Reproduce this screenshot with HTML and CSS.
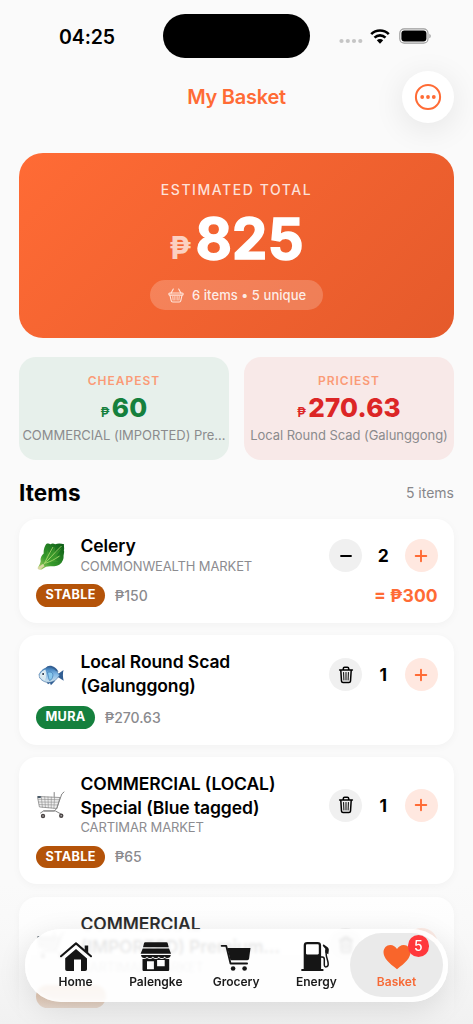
FILE: index.html
```html
<!DOCTYPE html>
<html lang="en">
<head>
<meta charset="utf-8">
<meta name="viewport" content="width=device-width, initial-scale=1">
<title>My Basket</title>
<link rel="stylesheet" href="styles.css">
</head>
<body>
<svg class="defs" width="0" height="0" aria-hidden="true">
  <defs>
    <symbol id="trash" viewBox="0 0 16 18">
      <g fill="none" stroke="#000" stroke-linecap="round" stroke-linejoin="round">
        <path stroke-width="1.5" d="M1.6 4h12.8M5.3 3.8V2.5c0-.9.5-1.3 1.3-1.3h2.8c.8 0 1.3.4 1.3 1.3v1.3M2.8 4.2l.7 10.9c.1.9.6 1.4 1.5 1.4h6c.9 0 1.4-.5 1.5-1.4l.7-10.9"/>
        <path stroke-width="1" d="M5.6 6.5l.3 7.5M8 6.5V14M10.4 6.5l-.3 7.5"/>
      </g>
    </symbol>
    <symbol id="plus" viewBox="0 0 14 14">
      <path d="M7 1.7v10.6M1.7 7h10.6" stroke="#ff6b35" stroke-width="1.9" stroke-linecap="round"/>
    </symbol>
    <symbol id="cart-emoji" viewBox="0 0 28 28">
      <g fill="none" stroke="#858585" stroke-linecap="round" stroke-linejoin="round">
        <path fill="#eeeeee" stroke-width=".8" d="M.8 5.5L23 6.5l-3.2 11L2.8 16z"/>
        <path stroke-width=".55" d="M1.3 8.3l21 .4M1.8 11l19.7.2M2.3 13.6l18.5.4M4.3 5.7l1.1 10.5M7.7 5.8l.7 10.6M11 6l.3 10.7M14.3 6.1l-.1 10.8M17.6 6.3l-.7 11"/>
        <path stroke-width="1" d="M27 1l-2.2 2-5.2 14.8-2.5 2.1H6.8M3.5 22l3-2h12l5.5 3M17.2 1.5v4"/>
      </g>
      <circle cx="6" cy="25" r="2.2" fill="#4b4545"/><circle cx="24.2" cy="24.7" r="2.2" fill="#4b4545"/>
      <circle cx="6" cy="25" r=".8" fill="#bbb"/><circle cx="24.2" cy="24.7" r=".8" fill="#bbb"/>
      <path d="M.8 5.2h3v1.7h-3z" fill="#34495b"/>
    </symbol>
  </defs>
</svg>
<div class="screen">
  <header class="status">
    <div class="time">04:25</div>
    <div class="island"></div>
    <div class="signals">
      <svg class="dots" width="24" height="6" viewBox="0 0 24 6" fill="#c5c5c5"><circle cx="2.5" cy="3" r="2.1"/><circle cx="8.8" cy="3" r="2.1"/><circle cx="15" cy="3" r="2.1"/><circle cx="21.3" cy="3" r="2.1"/></svg>
      <svg class="wifi" width="20" height="15" viewBox="0 0 20 15"><g fill="none" stroke="#000" stroke-width="2.6"><path d="M1.2 5.1C6.1.3 13.9.3 18.8 5.1"/><path d="M4.5 8.6c3.1-3 7.9-3 11 0"/></g><path d="M6.8 11.3c1.8-1.7 4.6-1.7 6.4 0L10 14.7z"/></svg>
      <svg class="battery" width="33" height="16" viewBox="0 0 33 16"><rect x=".8" y=".9" width="28.2" height="14.2" rx="4.4" fill="none" stroke="#9a9a9a" stroke-width="1.1"/><rect x="2.4" y="2.5" width="25" height="11" rx="3"/><path d="M30.4 5.7c1.8.8 1.8 3.8 0 4.6z" fill="#9a9a9a"/></svg>
    </div>
  </header>

  <div class="navbar">
    <h1>My Basket</h1>
    <button class="more" aria-label="More"><svg width="28" height="28" viewBox="0 0 28 28"><circle cx="14" cy="14" r="12.1" fill="none" stroke="#ff6b35" stroke-width="2"/><g fill="#ff6b35"><circle cx="8.2" cy="14" r="1.9"/><circle cx="14" cy="14" r="1.9"/><circle cx="19.8" cy="14" r="1.9"/></g></svg></button>
  </div>

  <main>
    <section class="hero">
      <div class="hero-label">ESTIMATED TOTAL</div>
      <div class="total"><span class="total-peso">₱</span><span class="total-num">825</span></div>
      <div class="summary">
        <svg width="16" height="15" viewBox="0 0 16 15" fill="none" stroke="#ffe6dc" stroke-width="1.1" stroke-linecap="round" stroke-linejoin="round"><rect x=".8" y="5" width="14.4" height="2.1" rx="1"/><path d="M3 5.3L5.3 1M13 5.3L10.7 1M2 7.3l1.2 5.4c.2.9.6 1.3 1.5 1.3h6.6c.9 0 1.3-.4 1.5-1.3L14 7.3"/><path stroke-width=".9" d="M4.8 8.5l.3 3.6M6.9 8.5v3.6M9.1 8.5v3.6M11.2 8.5l-.3 3.6"/></svg>
        <span>6 items • 5 unique</span>
      </div>
    </section>

    <section class="stats">
      <article class="stat cheap">
        <div class="stat-label">CHEAPEST</div>
        <div class="stat-price"><small>₱</small><b>60</b></div>
        <div class="stat-name">COMMERCIAL (IMPORTED) Pre…</div>
      </article>
      <article class="stat pricey">
        <div class="stat-label">PRICIEST</div>
        <div class="stat-price"><small>₱</small><b>270.63</b></div>
        <div class="stat-name">Local Round Scad (Galunggong)</div>
      </article>
    </section>

    <div class="list-head"><h2>Items</h2><span>5 items</span></div>

    <section class="list">
      <article class="card">
        <div class="row">
          <svg class="emoji" width="28" height="28" viewBox="0 0 28 28">
            <defs><linearGradient id="leaf" x1="0" y1="1" x2="1" y2="0"><stop offset="0" stop-color="#b5d66b"/><stop offset=".35" stop-color="#379b2c"/><stop offset="1" stop-color="#0b5a16"/></linearGradient></defs>
            <path fill="url(#leaf)" d="M1 25.5c1.4-2.3 2.3-4 2.7-6.5-.7-3 1-5.6 3-7.6-.4-3 .8-6.8 2.5-9.3 1.6-.8 3-.5 4.2.1 1.8-1.2 3.4-1 4.7.1 2.7-1 5.7-.8 9-.1-.6 2 .6 3.8-.3 6.1.9 2-.2 3.8-.3 5.6.4 2.7-.6 4.7-2 6.8-2.8 3.3-6.3 3.6-9.6 3.6-3.8-.4-6.6.4-9.1 2.4-1.7 1.6-4.2.7-4.8-1.2z"/>
            <path fill="#4aa832" d="M8 18.5L10.5 8l2 4.2L18 5l-.5 6.2L25 6l-5.4 8 4.8-.2-7.3 3.9 4.7 1.7-9.2 1.2z" opacity=".5"/>
            <path fill="none" stroke="#b5de73" stroke-width=".8" d="M4.8 24C11 19 17 11 24.5 4M7.5 21.2C10 16 13 10 16 5M8.5 21.2c5-1.6 9-3.6 14-7.2"/>
            <path fill="#d9d7a2" d="M.7 25.4c2.2-1.2 3.1-2.6 5.3-3.5l1.5 2.3c-1.9 1-3 2.7-4.6 3.3-1.5.1-2.5-.7-2.2-2.1z"/>
          </svg>
          <div class="name"><h3>Celery</h3><p>COMMONWEALTH MARKET</p></div>
          <div class="stepper"><button class="less" aria-label="Less"><svg width="14" height="14" viewBox="0 0 14 14"><path d="M2.1 7h9.8" stroke="#000" stroke-width="2.1" stroke-linecap="round"/></svg></button><span>2</span><button class="add" aria-label="Add"><svg width="14" height="14"><use href="#plus"/></svg></button></div>
        </div>
        <div class="meta"><span class="badge stable">STABLE</span><span class="price">₱150</span><strong>= ₱300</strong></div>
      </article>

      <article class="card">
        <div class="row">
          <svg class="emoji" width="28" height="28" viewBox="0 0 28 28">
            <defs><linearGradient id="fish" x1="0" y1="0" x2="0" y2="1"><stop offset="0" stop-color="#3677b4"/><stop offset=".45" stop-color="#83b9e6"/><stop offset="1" stop-color="#d0e3ee"/></linearGradient></defs>
            <path fill="#315e93" d="M8.5 7.3c2.1-3.4 6-3.1 9.4-.8 1.8 1.2 2.8 2.8 3.6 4.5zM20 13.8l6.5-4.7c-.8 3.3-.8 7.2.2 10.6l-6.2-3.9zM9 20.2l2 3.1 2-1.3.9 2.2 4.3-4.4z"/>
            <path fill="url(#fish)" stroke="#416d9c" stroke-width=".6" d="M1.8 14.2C3.9 9.3 7.9 6.2 12.8 6.6c4.7.4 7.5 4.3 9.7 7.7-2 3.5-5.2 6.5-9.6 7-5 .6-9-2-10.8-5.6l1.6-.5z"/>
            <path fill="#d9e8f0" d="M2.7 13.8c1.6-3.2 3.5-4.5 5.7-5.2 1.5 3.9 1.2 7.7-.7 11-2.2-.8-4.2-2.2-5-4z"/>
            <path fill="#88c8ed" stroke="#3c78b0" stroke-width=".7" d="M10.5 11.5c3.5-1.2 5.6.2 5.4 3-.2 2.5-1.5 4.6-3.3 5-1-1.3-1.3-4.5-2.1-8z"/>
            <circle cx="6.2" cy="13" r="1.6" fill="#fff"/><circle cx="6.1" cy="13" r="1" fill="#162d45"/>
          </svg>
          <div class="name"><h3>Local Round Scad<br>(Galunggong)</h3></div>
          <div class="stepper"><button class="less" aria-label="Remove"><svg width="16" height="18"><use href="#trash"/></svg></button><span>1</span><button class="add" aria-label="Add"><svg width="14" height="14"><use href="#plus"/></svg></button></div>
        </div>
        <div class="meta"><span class="badge mura">MURA</span><span class="price">₱270.63</span></div>
      </article>

      <article class="card">
        <div class="row">
          <svg class="emoji" width="28" height="28"><use href="#cart-emoji"/></svg>
          <div class="name"><h3>COMMERCIAL (LOCAL)<br>Special (Blue tagged)</h3><p>CARTIMAR MARKET</p></div>
          <div class="stepper"><button class="less" aria-label="Remove"><svg width="16" height="18"><use href="#trash"/></svg></button><span>1</span><button class="add" aria-label="Add"><svg width="14" height="14"><use href="#plus"/></svg></button></div>
        </div>
        <div class="meta"><span class="badge stable">STABLE</span><span class="price">₱65</span></div>
      </article>

      <article class="card">
        <div class="row">
          <svg class="emoji" width="28" height="28"><use href="#cart-emoji"/></svg>
          <div class="name"><h3>COMMERCIAL<br>(IMPORTED) Premium…</h3><p>CARTIMAR MARKET</p></div>
          <div class="stepper"><button class="less" aria-label="Remove"><svg width="16" height="18"><use href="#trash"/></svg></button><span>1</span><button class="add" aria-label="Add"><svg width="14" height="14"><use href="#plus"/></svg></button></div>
        </div>
        <div class="meta"><span class="badge stable blank"></span></div>
      </article>
    </section>
  </main>

  <div class="scrim"></div>
  <nav class="tabs">
    <a class="tab">
      <svg width="34" height="32" viewBox="0 0 34 32" fill="#151515"><path d="M6.2 17.2L17 8l11 9.4V28c0 1.3-.6 2-1.9 2H22V18.6h-7V30H8.1c-1.3 0-1.9-.7-1.9-2z"/><path d="M2 15.2L17 2.4l15 12.8" fill="none" stroke="#151515" stroke-width="2.1" stroke-linecap="round" stroke-linejoin="round"/><path d="M25.7 4.5h3.5v8.6l-3.5-3z"/></svg>
      <span>Home</span>
    </a>
    <a class="tab">
      <svg width="34" height="32" viewBox="0 0 34 32" fill="#151515"><path d="M6.2 1.3h21.3c.7 0 1 .3 1.2.9l1 4H4l1-4c.2-.6.5-.9 1.2-.9zM3.7 7.4H30l2.1 5.4H1.6zM2 14h29.8c-.3 2-1.4 3-3.1 3-1.4 0-2.4-.5-3-1.6-1.1 2.1-4.7 2.1-5.9 0-1.1 2.1-4.7 2.1-5.9 0-1.1 2.1-4.7 2.1-5.9 0-.6 1.1-1.6 1.6-3 1.6-1.7 0-2.7-1-3-3z"/><path fill-rule="evenodd" d="M3.5 18c1.8.2 3.2-.1 4.5-1 1.9 1.3 4 1.3 5.9 0 1.9 1.3 4 1.3 5.9 0 1.9 1.3 4 1.3 5.9 0 1.3.9 2.7 1.2 4.5 1v10.5c0 1-.5 1.5-1.5 1.5H5c-1 0-1.5-.5-1.5-1.5zM8 20.2v8h6.9v-8zM18.1 19v6.2h7.6V19z"/></svg>
      <span>Palengke</span>
    </a>
    <a class="tab">
      <svg width="34" height="32" viewBox="0 0 34 32" fill="#151515"><path d="M8.3 7h23.2l-1.4 10.600c-.2 1.200-.8 1.700-1.800 1.700H11.500z"/><path d="M2.600 4.800h4.600l4.300 17.700h16.600" fill="none" stroke="#151515" stroke-width="1.800" stroke-linecap="round" stroke-linejoin="round"/><circle cx="14.100" cy="27.500" r="2.300"/><circle cx="25.600" cy="27.500" r="2.300"/></svg>
      <span>Grocery</span>
    </a>
    <a class="tab">
      <svg width="34" height="32" viewBox="0 0 34 32" fill="#151515"><path fill-rule="evenodd" d="M4.700 4.500c0-2.500 1.100-3.500 3.600-3.500h10.200c2.500 0 3.600 1 3.600 3.500V28h1.500c.7 0 1 .4 1 1.100s-.3 1-1 1H3.200c-.7 0-1-.3-1-1s.3-1.100 1-1.100h1.500zM7 4.700v7.500c0 .8.4 1.200 1.200 1.200h10.400c.8 0 1.200-.4 1.200-1.200V4.700c0-.9-.4-1.400-1.200-1.400H8.200C7.400 3.300 7 3.800 7 4.700z"/><path d="M22 16h1.300c1.500 0 2 1 2 2.500v5.200c0 3.200 3.900 2.700 3.900-.4 0-4.500-2.100-6.300-2.100-11V8.800" fill="none" stroke="#151515" stroke-width="1.500"/><path d="M24.500 3.200l4.100 3c1 .8 1.400 2 1.200 3.300l-.5 3.800-3-1.700V7.800l-2.600-3.100z"/></svg>
      <span>Energy</span>
    </a>
    <a class="tab active">
      <svg width="34" height="32" viewBox="0 0 34 32" fill="#f9652b"><path d="M17 28.200C8.600 22 3.500 16.800 3.500 11.300 3.500 7 6.500 3.900 10.300 3.900c2.900 0 5.400 1.600 6.700 4.200 1.300-2.600 3.800-4.200 6.700-4.200 3.800 0 6.800 3.100 6.800 7.400 0 5.500-5.100 10.700-13.500 16.900z"/></svg>
      <span>Basket</span>
      <em class="count">5</em>
    </a>
  </nav>
</div>
</body>
</html>
```
FILE: styles.css
```css
* { box-sizing: border-box; }
html, body { margin: 0; height: 100%; overflow: hidden; background: #fafafa; }
body { font-family: Inter, "Noto Sans", sans-serif; color: #000; }
h1, h2, h3, p { margin: 0; }
button { border: 0; padding: 0; display: grid; place-items: center; border-radius: 50%; }
svg { display: block; flex: none; }
.defs { position: absolute; }
.screen { position: relative; width: 473px; height: 1024px; overflow: hidden; background: #fafafa; }

.status { display: grid; grid-template-columns: 163px 147px 163px; height: 71px; padding-top: 14px; }
.time { padding-left: 59px; font-size: 19.5px; line-height: 46px; font-weight: 600; letter-spacing: -.1px; }
.island { height: 43.5px; border-radius: 22px; background: #000; }
.signals { display: flex; height: 45px; align-items: center; padding-left: 28.5px; }
.dots { margin-top: 9px; }
.wifi { margin: -1px 0 0 7.5px; }
.battery { margin: -1px 0 0 8.5px; }

.navbar { display: grid; grid-template-columns: 1fr auto 1fr; height: 82px; align-items: start; padding: 0 19px; }
.navbar h1 { grid-column: 2; font-size: 20px; line-height: 53px; font-weight: 600; color: #ff6b35; letter-spacing: -.25px; }
.more { width: 52px; height: 52px; justify-self: end; background: #fff; box-shadow: 0 6px 32px rgba(0,0,0,.09); }

main { padding: 0 19px; }
.hero { display: flex; flex-direction: column; align-items: center; height: 185px; padding-top: 27px; border-radius: 24px; color: #fff; background: linear-gradient(135deg, #ff6b35, #e55a2b); }
.hero-label { font-size: 14px; line-height: 20px; font-weight: 500; letter-spacing: 1.55px; color: rgba(255,255,255,.82); }
.total { display: flex; align-items: baseline; height: 70px; margin-top: 4px; line-height: 70px; }
.total-peso { font-size: 31px; font-weight: 700; opacity: .7; margin-right: 4px; }
.total-num { font-size: 56px; font-weight: 700; letter-spacing: .3px; -webkit-text-stroke: 1.5px #fff; }
.summary { display: flex; align-items: center; gap: 8px; width: 173px; height: 30px; margin-top: 6px; padding-left: 18px; border-radius: 15px; background: rgba(255,255,255,.2); font-size: 13px; font-weight: 500; letter-spacing: .06px; color: rgba(255,255,255,.87); white-space: nowrap; }

.stats { display: grid; grid-template-columns: 1fr 1fr; gap: 15px; margin-top: 19px; }
.stat { height: 103px; padding-top: 15px; border-radius: 17px; text-align: center; white-space: nowrap; }
.cheap { background: #e7f0eb; }
.pricey { background: #f8e9e8; }
.stat-label { font-size: 12px; line-height: 18px; font-weight: 600; letter-spacing: 1px; color: #fb9b77; }
.stat-price { display: flex; justify-content: center; align-items: baseline; gap: 2px; height: 34px; line-height: 34px; margin-top: 1px; }
.stat-price small { font-size: 13px; font-weight: 600; }
.stat-price b { font-size: 26px; font-weight: 800; letter-spacing: .25px; }
.cheap .stat-price { color: #15803d; }
.pricey .stat-price { color: #dc2626; }
.stat-name { font-size: 13px; line-height: 20px; color: #8b8b8d; letter-spacing: -.05px; }

.list-head { display: flex; justify-content: space-between; height: 59px; padding-top: 17px; line-height: 32px; }
.list-head h2 { font-size: 22.5px; font-weight: 700; letter-spacing: .1px; }
.list-head span { font-size: 14px; color: #87878b; }

.list { display: grid; gap: 12.5px; }
.card { padding: 16px 16.5px; border-radius: 18px; background: #fff; box-shadow: 0 2px 8px rgba(0,0,0,.035); white-space: nowrap; }
.row { display: flex; align-items: center; }
.emoji { width: 28px; margin: 0 16px 0 1px; }
.name { flex: 1; margin: -1px 0 1px; }
.name h3 { font-size: 17.5px; line-height: 23.5px; font-weight: 600; letter-spacing: -.1px; }
.name p { font-size: 13px; line-height: 17.5px; letter-spacing: -.13px; color: #8c8c90; }
.stepper { display: flex; align-items: center; }
.stepper button { width: 33px; height: 33px; }
.stepper span { width: 42.5px; text-align: center; font-size: 17.5px; font-weight: 700; }
.less { background: #f0f0f0; }
.add { background: #ffe8e0; }
.meta { display: flex; align-items: center; height: 22.5px; margin-top: 8px; }
.badge { height: 22.5px; padding: 0 9.5px 0 10px; border-radius: 12px; color: #fff; font-size: 12.7px; line-height: 22.5px; font-weight: 700; letter-spacing: .3px; }
.stable { background: #b45309; }
.mura { background: #15803d; }
.blank { width: 70px; }
.price { margin-left: 9.5px; font-size: 14px; font-weight: 500; color: #8a8a8e; }
.meta strong { margin-left: auto; color: #ff6b35; font-size: 17.5px; font-weight: 700; }

.scrim { position: absolute; inset: 884px 0 0; background: linear-gradient(rgba(248,248,248,0), rgba(243,243,243,.2) 30%, rgba(241,241,241,.8) 85%, #f1f1f1); }
.tabs { position: absolute; left: 25px; top: 929px; display: grid; grid-template-columns: repeat(5, 80.25px); width: 423px; height: 72.5px; padding: 4px 0 4px 10.5px; border-radius: 36px; background: rgba(255,255,255,.86); backdrop-filter: blur(1.5px); box-shadow: 0 8px 30px rgba(0,0,0,.11), inset 0 0 5px #fff; }
.tab { position: relative; display: flex; flex-direction: column; align-items: center; padding-top: 8px; font-size: 12px; line-height: 16px; font-weight: 600; color: #1b1b1b; }
.tab svg { margin-bottom: 1px; }
.active { width: 93px; height: 64px; margin-left: -6.5px; border-radius: 32px; background: #eaeaea; color: #f76a36; }
.count { position: absolute; left: 57.5px; top: 2px; width: 21.5px; height: 21.5px; border-radius: 50%; background: #ff383c; color: #fff; font-style: normal; font-size: 14px; line-height: 21.5px; font-weight: 500; text-align: center; }
```
